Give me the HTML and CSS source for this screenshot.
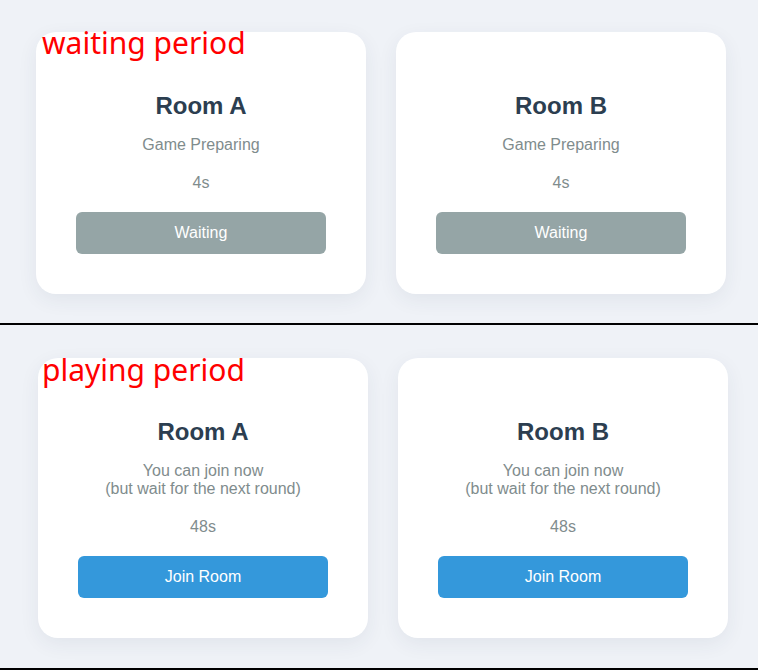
FILE: index.html
```html
<!DOCTYPE html>
<html>
<head>
<meta charset="utf-8">
<link rel="stylesheet" href="styles.css">
</head>
<body>
<section class="panel panel-wait">
  <div class="label">waiting period</div>
  <div class="grid">
    <div class="card">
      <h2 class="title">Room A</h2>
      <p class="status">Game Preparing</p>
      <p class="timer">4s</p>
      <button class="btn btn-wait">Waiting</button>
    </div>
    <div class="card">
      <h2 class="title">Room B</h2>
      <p class="status">Game Preparing</p>
      <p class="timer">4s</p>
      <button class="btn btn-wait">Waiting</button>
    </div>
  </div>
</section>
<section class="panel panel-play">
  <div class="label">playing period</div>
  <div class="grid">
    <div class="card">
      <h2 class="title">Room A</h2>
      <p class="status">You can join now<br>(but wait for the next round)</p>
      <p class="timer">48s</p>
      <button class="btn btn-join">Join Room</button>
    </div>
    <div class="card">
      <h2 class="title">Room B</h2>
      <p class="status">You can join now<br>(but wait for the next round)</p>
      <p class="timer">48s</p>
      <button class="btn btn-join">Join Room</button>
    </div>
  </div>
</section>
</body>
</html>
```
FILE: styles.css
```css
html, body {
  margin: 0;
  padding: 0;
  background: #eff2f7;
  font-family: "Liberation Sans", Arial, sans-serif;
}
.panel {
  position: relative;
  border-bottom: 2px solid #000;
}
.panel-wait {
  padding: 32px 36px 29px;
}
.panel-play {
  padding: 33px 38px 30px;
}
.grid {
  display: grid;
  grid-template-columns: 330px 330px;
  gap: 30px;
}
.card {
  background: #fff;
  border-radius: 20px;
  box-shadow: 0 6px 20px rgba(40, 60, 90, 0.07);
  padding: 40px;
  text-align: center;
  display: flex;
  flex-direction: column;
  align-items: stretch;
}
.title {
  margin: 20px 0 0;
  font-size: 24px;
  font-weight: bold;
  color: #2c3e50;
  line-height: 27.6px;
}
.status {
  margin: 16px 0 0;
  font-size: 16px;
  color: #7f8c8d;
  line-height: 18.4px;
}
.timer {
  margin: 20px 0 0;
  font-size: 16px;
  color: #7f8c8d;
  line-height: 18.4px;
}
.panel-play .timer {
  margin-top: 19px;
}
.btn {
  margin-top: 20px;
  height: 42px;
  border: none;
  border-radius: 6px;
  color: #fff;
  font-family: "Liberation Sans", Arial, sans-serif;
  font-size: 16px;
  padding: 0;
}
.btn-wait {
  background: #95a5a6;
}
.btn-join {
  background: #3498db;
}
.label {
  position: absolute;
  left: 42px;
  top: 23px;
  font-family: "Noto Sans", "Noto Sans CJK SC", sans-serif;
  font-size: 30px;
  line-height: 40px;
  color: #ff0000;
}
.panel-play .label {
  top: 25px;
}
```
